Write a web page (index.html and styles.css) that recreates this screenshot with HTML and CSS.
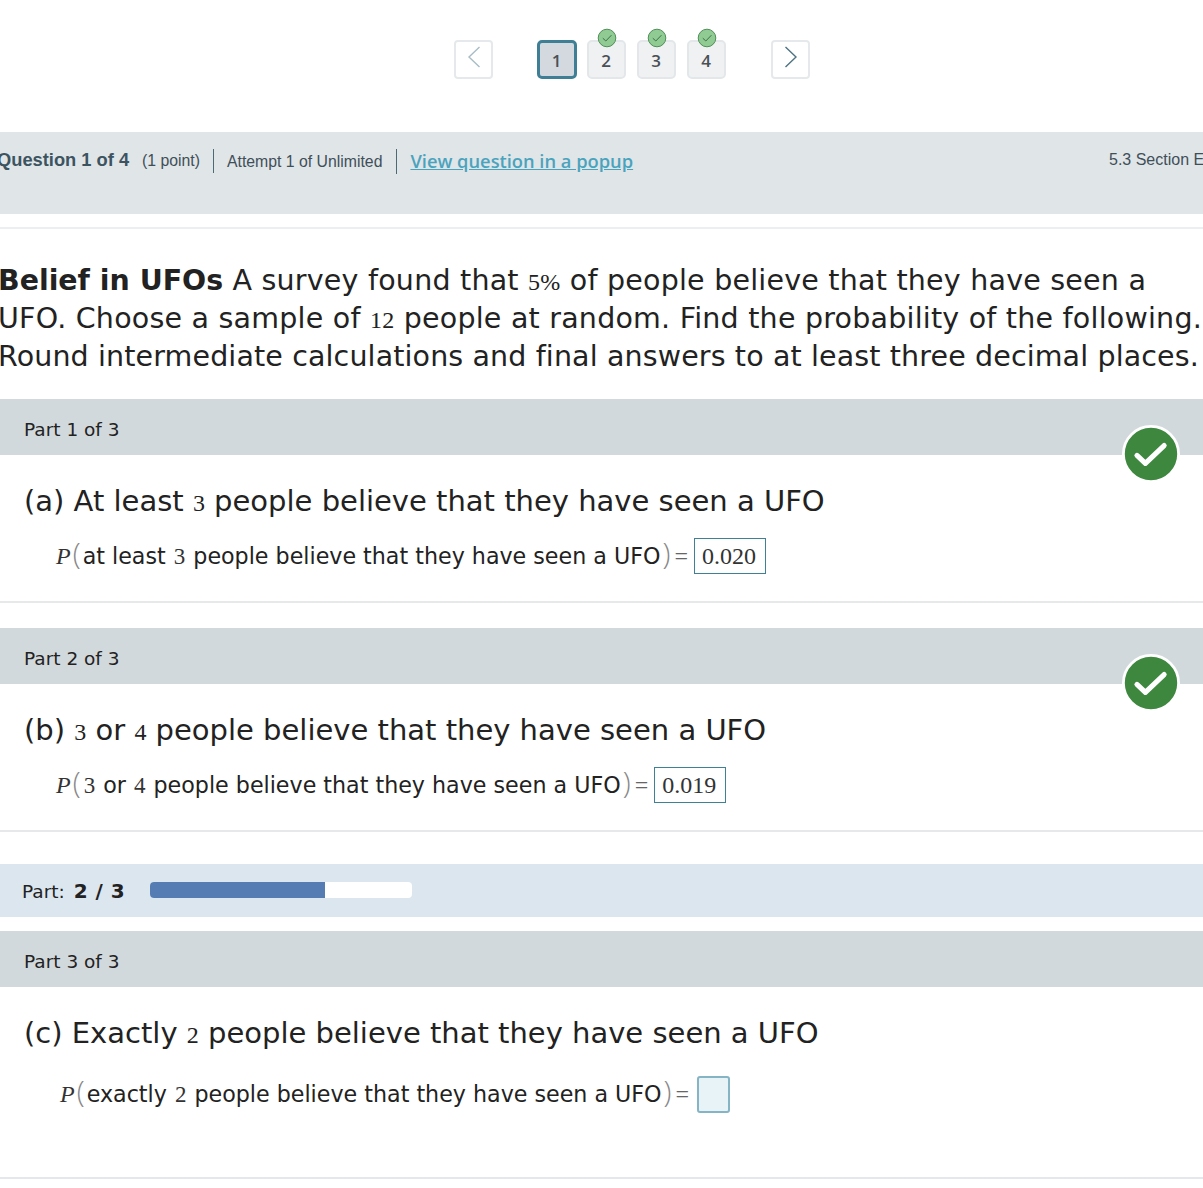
FILE: index.html
```html
<!DOCTYPE html>
<html>
<head>
  <meta charset="utf-8">
  <title>Question 1 of 4</title>
  <link rel="stylesheet" href="styles.css">
</head>
<body>

  <nav class="pager">
    <a class="arrow arrow-off">
      <svg width="14" height="24" viewBox="0 0 14 24"><path d="M12.5 2 L2 12 L12.5 22" /></svg>
    </a>
    <div class="pages">
      <a class="page current">1</a>
      <a class="page">2
        <svg class="done" width="20" height="20" viewBox="0 0 20 20"><circle cx="10" cy="10" r="8.8" /><path d="M5.8 10.2 L8.8 13 L14.4 7.2" /></svg>
      </a>
      <a class="page">3
        <svg class="done" width="20" height="20" viewBox="0 0 20 20"><circle cx="10" cy="10" r="8.8" /><path d="M5.8 10.2 L8.8 13 L14.4 7.2" /></svg>
      </a>
      <a class="page">4
        <svg class="done" width="20" height="20" viewBox="0 0 20 20"><circle cx="10" cy="10" r="8.8" /><path d="M5.8 10.2 L8.8 13 L14.4 7.2" /></svg>
      </a>
    </div>
    <a class="arrow">
      <svg width="14" height="24" viewBox="0 0 14 24"><path d="M1.5 2 L12 12 L1.5 22" /></svg>
    </a>
  </nav>

  <header class="question-bar">
    <div class="question-info">
      <strong class="question-num">Question 1 of 4</strong>
      <span class="points">(1 point)</span>
      <span class="attempt">Attempt 1 of Unlimited</span>
      <a class="popup" href="#">View question in a popup</a>
    </div>
    <div class="section-name">5.3 Section E</div>
  </header>

  <p class="stem"><b>Belief in UFOs</b> A survey found that <span class="num">5%</span> of people believe that they have seen a<br>UFO. Choose a sample of <span class="num">12</span> people at random. Find the probability of the following.<br><span class="stem-last">Round intermediate calculations and final answers to at least three decimal places.</span></p>

  <section class="part part-a">
    <div class="part-title">Part 1 of 3
      <svg class="correct" width="58" height="58" viewBox="0 0 62 62"><circle cx="31" cy="31" r="29.5" /><path d="M16 32.5 L25 41 L45 22" /></svg>
    </div>
    <h2 class="part-q">(a) At least <span class="num">3</span> people believe that they have seen a UFO</h2>
    <div class="answer-row"><i class="var">P</i><span class="paren">(</span>at least <span class="num">3</span> people believe that they have seen a UFO<span class="paren">)</span><span class="eq">=</span><span class="answer">0.020</span></div>
  </section>

  <section class="part part-b">
    <div class="part-title">Part 2 of 3
      <svg class="correct" width="58" height="58" viewBox="0 0 62 62"><circle cx="31" cy="31" r="29.5" /><path d="M16 32.5 L25 41 L45 22" /></svg>
    </div>
    <h2 class="part-q">(b) <span class="num">3</span> or <span class="num">4</span> people believe that they have seen a UFO</h2>
    <div class="answer-row"><i class="var">P</i><span class="paren">(</span><span class="num">3</span> or <span class="num">4</span> people believe that they have seen a UFO<span class="paren">)</span><span class="eq">=</span><span class="answer">0.019</span></div>
  </section>

  <div class="progress">
    <span class="progress-label">Part: <b>2 / 3</b></span>
    <div class="progress-track"><div class="progress-fill" style="width: 66.8%"></div></div>
  </div>

  <section class="part part-c">
    <div class="part-title">Part 3 of 3</div>
    <h2 class="part-q">(c) Exactly <span class="num">2</span> people believe that they have seen a UFO</h2>
    <div class="answer-row"><i class="var">P</i><span class="paren">(</span>exactly <span class="num">2</span> people believe that they have seen a UFO<span class="paren">)</span><span class="eq">=</span><span class="answer answer-empty"></span></div>
  </section>

</body>
</html>
```

FILE: styles.css
```css
html, body {
    margin: 0;
    padding: 0;
    height: 1188px;
    overflow: hidden;
}

body {
    font-family: "DejaVu Sans", Verdana, sans-serif;
    color: #1d1d1d;
    background: #fff;
}

.num {
    font-family: "Liberation Serif", serif;
    line-height: 0;
}

/* pager */
.pager {
    height: 132px;
    padding: 40px 393px 0 454px;
    box-sizing: border-box;
    display: flex;
    align-items: flex-start;
    justify-content: space-between;
}

.arrow {
    width: 39px;
    height: 39px;
    box-sizing: border-box;
    border: 2px solid #e6e9eb;
    border-radius: 4px;
    display: flex;
    justify-content: center;
    padding-top: 3px;
}

.arrow svg {
    fill: none;
    stroke: #4e7384;
    stroke-width: 1.4;
}

.arrow-off svg {
    stroke: #a9bcc6;
}

.pages {
    display: flex;
    gap: 11px;
    margin-right: 2px;
}

.page {
    position: relative;
    width: 39px;
    height: 39px;
    box-sizing: border-box;
    border: 2px solid #e3e7ea;
    border-radius: 5px;
    background: #eff1f3;
    font-family: "Open Sans", sans-serif;
    font-weight: 600;
    font-size: 17px;
    color: #4a5056;
    text-align: center;
    line-height: 38px;
}

.page.current {
    width: 40px;
    margin-right: -1px;
    border: 3px solid #3f7f96;
    background: #d3d9de;
    line-height: 36px;
}

.done {
    position: absolute;
    top: -14px;
    left: 8px;
}

.done circle {
    fill: #8fcb92;
    stroke: #4f8f58;
    stroke-width: 1;
}

.done path {
    fill: none;
    stroke: #3d6f48;
    stroke-width: 1;
}

/* question header */
.question-bar {
    height: 82px;
    background: #e0e5e8;
    display: flex;
    justify-content: space-between;
    font-family: "Liberation Sans", sans-serif;
    color: #3f4f58;
    white-space: nowrap;
}

.question-info {
    display: flex;
    align-items: center;
    height: 58px;
    margin-left: -3px;
}

.question-num {
    font-size: 18.3px;
    margin: 0 13px 2px 0;
    color: #3c5360;
}

.points {
    font-size: 15.8px;
    padding-right: 13px;
    border-right: 1px solid #4e6875;
    line-height: 24px;
}

.attempt {
    font-size: 15.8px;
    padding: 0 14px 0 13px;
    border-right: 1px solid #4e6875;
    line-height: 25px;
}

.popup {
    font-family: "Open Sans", sans-serif;
    font-size: 18.3px;
    font-weight: 600;
    color: #4aa3bd;
    margin: 0 0 2px 13px;
}

.section-name {
    font-size: 16px;
    padding-top: 19px;
    width: 94px;
    overflow: hidden;
}

/* question text */
.stem {
    margin: 13px 0 0 -2px;
    padding-top: 33px;
    border-top: 2px solid #eceeef;
    font-size: 28.5px;
    letter-spacing: 0.22px;
    line-height: 38px;
    height: 137px;
    white-space: nowrap;
    color: #222;
}

.stem b {
    letter-spacing: 0;
    font-size: 28.4px;
}

.stem .num {
    font-size: 24px;
}

.stem-last {
    letter-spacing: 0.13px;
}

/* parts */
.part-title {
    position: relative;
    height: 56px;
    line-height: 61px;
    padding-left: 24px;
    background: #d2d9dd;
    font-size: 18.5px;
    color: #222;
}

.correct {
    position: absolute;
    right: 23px;
    top: 26px;
}

.correct circle {
    fill: #3e873f;
    stroke: #fff;
    stroke-width: 3;
}

.correct path {
    fill: none;
    stroke: #fff;
    stroke-width: 5.5;
    stroke-linecap: round;
    stroke-linejoin: round;
}

.part-q {
    margin: 0;
    padding: 27px 0 0 24px;
    font-size: 29px;
    font-weight: normal;
    line-height: 38px;
    color: #222;
}

.part-q .num {
    font-size: 24px;
}

.answer-row {
    white-space: nowrap;
    padding-left: 56px;
    margin-top: 18px;
    height: 36px;
    line-height: 36px;
    font-size: 22.2px;
    color: #222;
}

.answer-row .num {
    font-size: 23px;
    margin: 0 1px;
    color: #333;
}

.var {
    font-family: "Liberation Serif", serif;
    font-size: 24px;
    line-height: 0;
    color: #333;
}

.paren {
    display: inline-block;
    width: 10px;
    margin-left: 2px;
    font-size: 29px;
    font-weight: 200;
    font-family: "Open Sans", sans-serif;
    color: #888;
    line-height: 0;
}

.eq {
    font-family: "Liberation Serif", serif;
    font-size: 24px;
    line-height: 0;
    color: #666;
    margin: 0 6px 0 2px;
}

.answer {
    display: inline-block;
    vertical-align: top;
    box-sizing: border-box;
    height: 36px;
    padding: 0 9px 0 7px;
    border: 1px solid #3f8096;
    font-family: "Liberation Serif", serif;
    font-size: 24px;
    line-height: 34px;
    color: #333;
}

.answer-empty {
    width: 33px;
    height: 37px;
    padding: 0;
    border: 2px solid #85b4c4;
    border-radius: 3px;
    background: #e8f3f8;
}

.part-a {
    height: 202px;
    border-bottom: 2px solid #e6e8ea;
    margin-bottom: 25px;
}

.part-b {
    height: 202px;
    border-bottom: 2px solid #e6e8ea;
    margin-bottom: 32px;
}

.part-c {
    height: 246px;
    border-bottom: 2px solid #e4e7ec;
}

.part-c .answer-row {
    padding-left: 60px;
    margin-top: 24px;
}

.part-c .eq {
    margin-right: 8px;
}

.progress {
    display: flex;
    align-items: center;
    height: 53px;
    padding-left: 22px;
    margin-bottom: 14px;
    background: #dce6ef;
    font-size: 18.5px;
    color: #222;
}

.progress-label {
    width: 128px;
}

.progress-label b {
    font-size: 20px;
    word-spacing: 1px;
    margin-left: 3px;
}

.progress-track {
    width: 262px;
    height: 16px;
    margin-bottom: 2px;
    border-radius: 4px;
    background: #fff;
    overflow: hidden;
}

.progress-fill {
    height: 100%;
    background: #567db3;
}
```
